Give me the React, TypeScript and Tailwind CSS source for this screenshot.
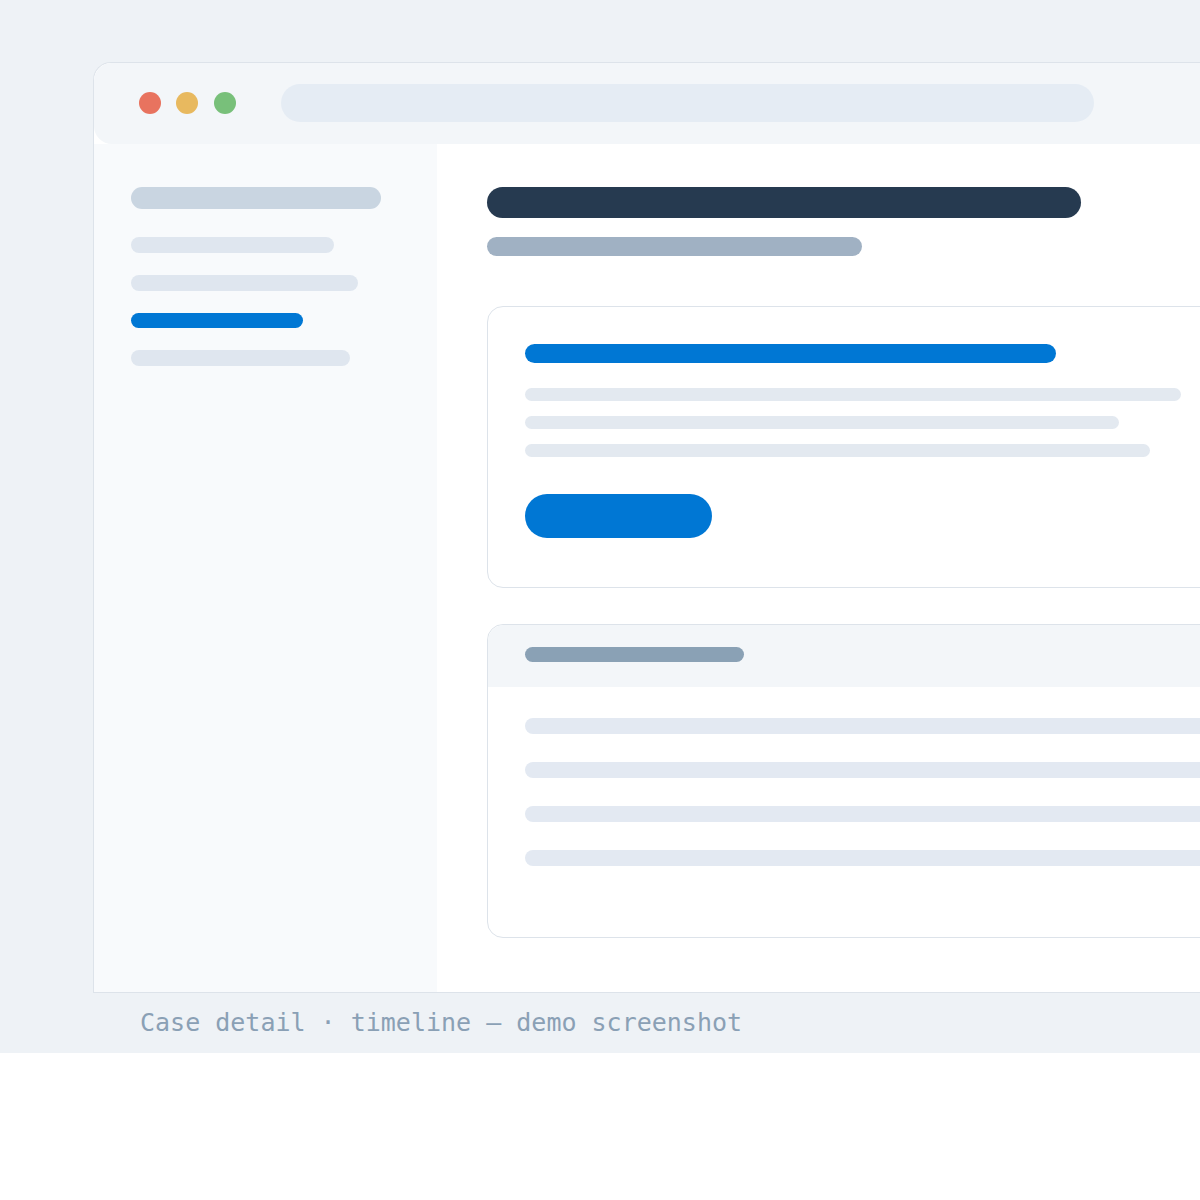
export default function App() {
  return (
    <div className="w-[1200px] h-[1200px] bg-white overflow-hidden">
      <div className="h-[1053px] bg-[#eef2f6] pt-[62px] pl-[93px] overflow-hidden flex flex-col">
        <div className="w-[1200px] flex flex-col border-l border-t border-b border-[#dde3ea] rounded-tl-[18px] bg-white">
          <div className="h-[81px] rounded-[18px] bg-[#f3f6f9] flex items-start pl-[45px]">
            <div className="flex mt-[29px]">
              <div className="w-[22px] h-[22px] rounded-full bg-[#e8735f]" />
              <div className="ml-[15px] w-[22px] h-[22px] rounded-full bg-[#e8b95f]" />
              <div className="ml-[16px] w-[22px] h-[22px] rounded-full bg-[#78c07a]" />
            </div>
            <div className="mt-[21px] ml-[45px] w-[813px] h-[38px] rounded-full bg-[#e5ecf4]" />
          </div>
          <div className="h-[848px] flex">
            <div className="w-[343px] bg-[#f8fafc] pl-[37px] pt-[43px] flex flex-col">
              <div className="w-[250px] h-[22px] rounded-full bg-[#c9d5e1]" />
              <div className="mt-[28px] w-[203px] h-[16px] rounded-full bg-[#dfe6ef]" />
              <div className="mt-[22px] w-[227px] h-[16px] rounded-full bg-[#dfe6ef]" />
              <div className="mt-[22px] w-[172px] h-[15px] rounded-full bg-[#0077d4]" />
              <div className="mt-[22px] w-[219px] h-[16px] rounded-full bg-[#dfe6ef]" />
            </div>
            <div className="flex-1 pl-[50px] pt-[43px] flex flex-col">
              <div className="w-[594px] h-[31px] rounded-full bg-[#263a50]" />
              <div className="mt-[19px] w-[375px] h-[19px] rounded-full bg-[#a0b1c3]" />
              <div className="mt-[50px] h-[282px] border border-[#dde3ea] rounded-[16px] pl-[37px] pt-[37px] flex flex-col">
                <div className="w-[531px] h-[19px] rounded-full bg-[#0077d4]" />
                <div className="mt-[25px] w-[656px] h-[13px] rounded-full bg-[#e3e9f0]" />
                <div className="mt-[15px] w-[594px] h-[13px] rounded-full bg-[#e3e9f0]" />
                <div className="mt-[15px] w-[625px] h-[13px] rounded-full bg-[#e3e9f0]" />
                <div className="mt-[37px] w-[187px] h-[44px] rounded-full bg-[#0077d4]" />
              </div>
              <div className="mt-[36px] h-[314px] border border-[#dde3ea] rounded-[16px] flex flex-col">
                <div className="h-[62px] bg-[#f3f6f9] rounded-t-[16px] pl-[37px] pt-[22px]">
                  <div className="w-[219px] h-[15px] rounded-full bg-[#8aa1b5]" />
                </div>
                <div className="pl-[37px] pt-[31px] flex flex-col gap-[28px]">
                  <div className="h-[16px] rounded-l-full bg-[#e3e9f2]" />
                  <div className="h-[16px] rounded-l-full bg-[#e3e9f2]" />
                  <div className="h-[16px] rounded-l-full bg-[#e3e9f2]" />
                  <div className="h-[16px] rounded-l-full bg-[#e3e9f2]" />
                </div>
              </div>
            </div>
          </div>
        </div>
        <div
          className="pl-[47px] pt-[14px] text-[25px] leading-[32px] text-[#8aa0b5] whitespace-nowrap"
          style={{ fontFamily: '"DejaVu Sans Mono", monospace' }}
        >
          Case detail · timeline — demo screenshot
        </div>
      </div>
    </div>
  );
}
